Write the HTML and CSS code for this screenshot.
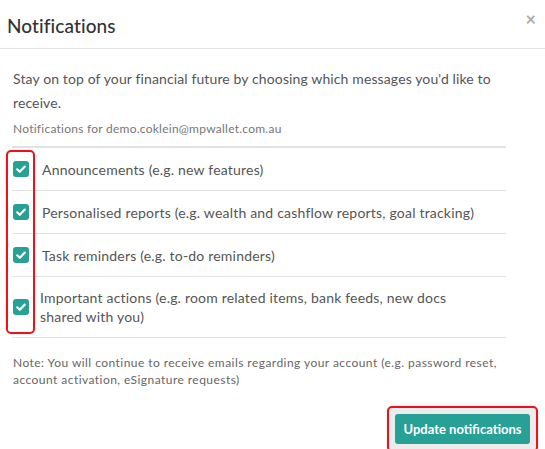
FILE: index.html
```html
<!DOCTYPE html>
<html>
<head>
<meta charset="utf-8">
<link rel="stylesheet" href="styles.css">
</head>
<body>
<div class="modal">
  <div class="modal-header">
    <h1 class="title">Notifications</h1>
    <span class="close">&times;</span>
  </div>
  <div class="modal-body">
    <p class="intro">Stay on top of your financial future by choosing which messages you'd like to receive.</p>
    <p class="email">Notifications for demo.coklein@mpwallet.com.au</p>
    <div class="list">
      <div class="row">
        <span class="check"><svg viewBox="0 0 16 16" width="16" height="16"><path d="M4.2 8.3 L6.8 10.8 L11.8 5.6" fill="none" stroke="#fff" stroke-width="2.2" stroke-linecap="round" stroke-linejoin="round"/></svg></span>
        <span class="label">Announcements (e.g. new features)</span>
      </div>
      <div class="row">
        <span class="check"><svg viewBox="0 0 16 16" width="16" height="16"><path d="M4.2 8.3 L6.8 10.8 L11.8 5.6" fill="none" stroke="#fff" stroke-width="2.2" stroke-linecap="round" stroke-linejoin="round"/></svg></span>
        <span class="label">Personalised reports (e.g. wealth and cashflow reports, goal tracking)</span>
      </div>
      <div class="row">
        <span class="check"><svg viewBox="0 0 16 16" width="16" height="16"><path d="M4.2 8.3 L6.8 10.8 L11.8 5.6" fill="none" stroke="#fff" stroke-width="2.2" stroke-linecap="round" stroke-linejoin="round"/></svg></span>
        <span class="label">Task reminders (e.g. to-do reminders)</span>
      </div>
      <div class="row tall">
        <span class="check"><svg viewBox="0 0 16 16" width="16" height="16"><path d="M4.2 8.3 L6.8 10.8 L11.8 5.6" fill="none" stroke="#fff" stroke-width="2.2" stroke-linecap="round" stroke-linejoin="round"/></svg></span>
        <span class="label narrow">Important actions (e.g. room related items, bank feeds, new docs shared with you)</span>
      </div>
      <div class="highlight highlight-checks"></div>
    </div>
    <p class="note">Note: You will continue to receive emails regarding your account (e.g. password reset, account activation, eSignature requests)</p>
  </div>
  <div class="modal-footer">
    <div class="btn-wrap">
      <button class="btn">Update notifications</button>
    </div>
  </div>
</div>
</body>
</html>
```

FILE: styles.css
```css
html, body {
  margin: 0;
  padding: 0;
  background: #fff;
}
body {
  font-family: Lato, "Noto Sans", sans-serif;
  color: #555;
}
.modal {
  width: 545px;
  height: 449px;
  overflow: hidden;
}
.modal-header {
  height: 48px;
  border-bottom: 1px solid #e5e5e5;
  display: flex;
  align-items: flex-start;
  justify-content: space-between;
  padding: 0 8px 0 7px;
}
.title {
  margin: 14px 0 0;
  font-size: 19px;
  font-weight: 500;
  color: #333;
  letter-spacing: 0.1px;
}
.close {
  margin-top: 7px;
  margin-right: 1px;
  font-size: 18px;
  font-weight: 700;
  color: #ababab;
  line-height: 24px;
}
.modal-body {
  padding: 18px 39px 0 12px;
}
.intro {
  margin: 0 0 0 1px;
  font-size: 14px;
  line-height: 24px;
  color: #555;
  letter-spacing: 0.12px;
}
.email {
  margin: 6px 0 0 1px;
  font-size: 12px;
  line-height: 16px;
  color: #777;
  letter-spacing: 0.25px;
}
.list {
  position: relative;
  margin-top: 9px;
  border-top: 2px solid #dfe3e6;
}
.row {
  display: flex;
  align-items: center;
  gap: 13px;
  height: 42px;
  border-bottom: 1px solid #e3e3e3;
  padding-left: 1px;
}
.row.tall {
  height: 60px;
}
.check {
  flex: none;
  width: 16px;
  height: 16px;
  border-radius: 3px;
  background: #27a096;
  display: flex;
}
.label {
  font-size: 14px;
  line-height: 19px;
  color: #555;
  letter-spacing: 0.2px;
}
.label.narrow {
  max-width: 415px;
  margin-left: -2px;
}
.highlight {
  position: absolute;
  border: 2px solid #e8141c;
  border-radius: 5px;
  box-shadow: 0 0 3px rgba(0,0,0,0.15);
}
.highlight-checks {
  left: -6px;
  top: 2px;
  width: 25px;
  height: 180px;
}
.note {
  margin: 16px 0 0 1px;
  font-size: 12px;
  line-height: 17px;
  color: #666;
  letter-spacing: 0.45px;
}
.modal-footer {
  display: flex;
  justify-content: flex-end;
  padding: 18px 7px 0 0;
}
.btn-wrap {
  border: 2px solid #e8141c;
  border-radius: 5px;
  padding: 6px;
  background: #ececec;
  box-shadow: 0 0 3px rgba(0,0,0,0.15);
}
.btn {
  display: block;
  width: 135px;
  height: 30px;
  border: none;
  border-radius: 3px;
  background: #27a096;
  color: #fff;
  font-family: Lato, "Noto Sans", sans-serif;
  font-size: 13px;
  font-weight: 700;
  padding: 0;
}
```
